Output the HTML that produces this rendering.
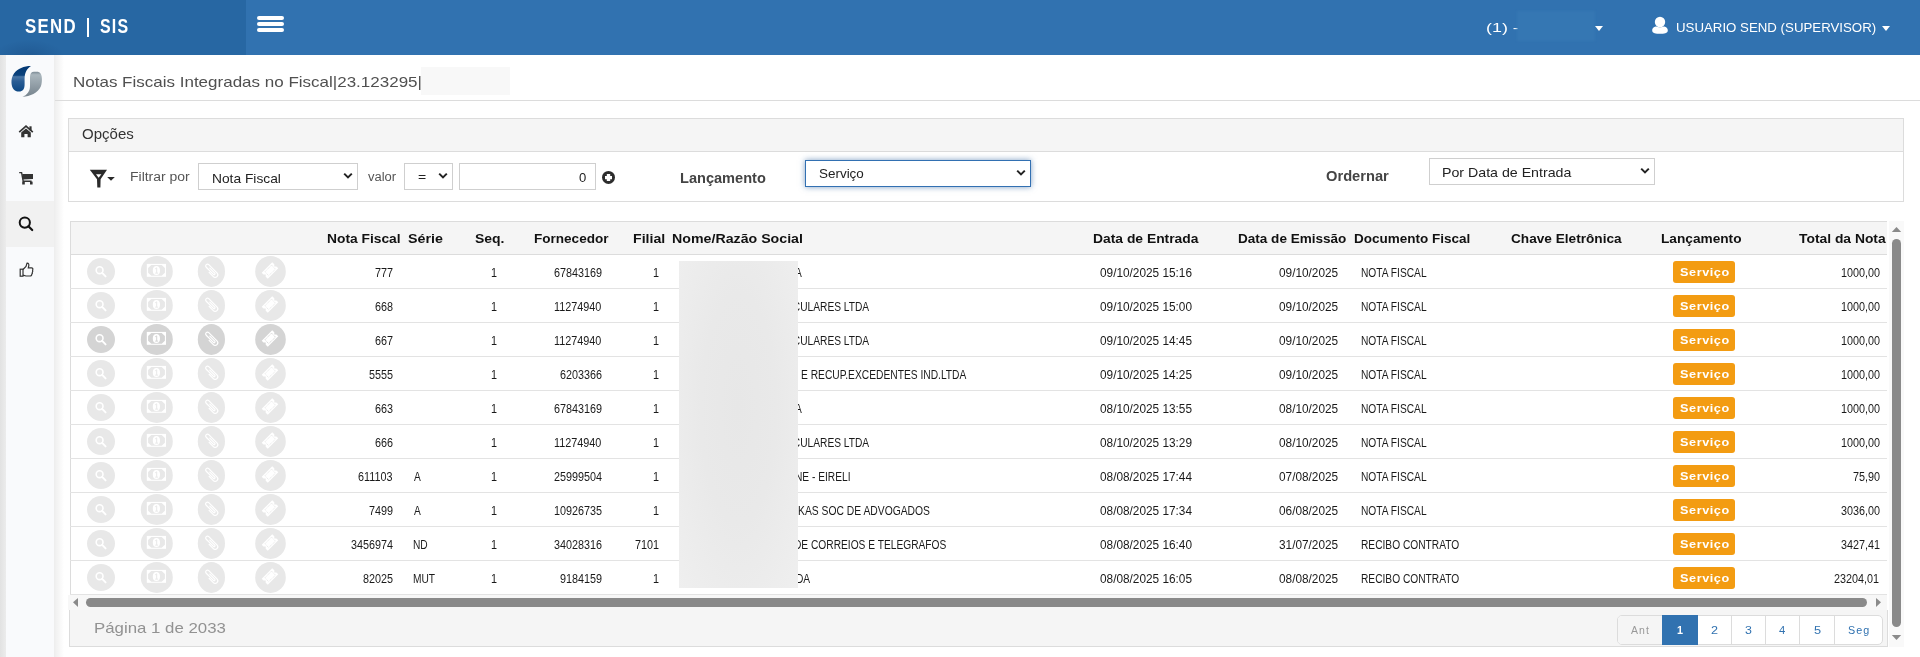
<!DOCTYPE html>
<html><head><meta charset="utf-8"><title>Notas Fiscais Integradas no Fiscal</title>
<style>
html,body{margin:0;padding:0;width:1920px;height:657px;overflow:hidden;background:#fff;font-family:"Liberation Sans",sans-serif}
body{position:relative}
.t{position:absolute;white-space:pre}
</style></head><body>
<div style="position:absolute;left:0px;top:0px;width:1920px;height:55px;background:#3172b0"></div>
<div style="position:absolute;left:0px;top:0px;width:246px;height:55px;background:#2767a3"></div>
<div style="position:absolute;left:0px;top:40px;width:64px;height:15px;background:radial-gradient(ellipse 55% 100% at 45% 100%,rgba(0,25,70,0.16),rgba(0,25,70,0))"></div>
<div class="t" style="left:24.78px;top:26px;font:bold 20px 'Liberation Sans';line-height:0;color:#fff;transform:scaleX(0.8414);transform-origin:0 0;letter-spacing:1.5px">SEND</div>
<div style="position:absolute;left:86.5px;top:18px;width:2.2px;height:19px;background:#fff"></div>
<div class="t" style="left:99.61px;top:26px;font:bold 20px 'Liberation Sans';line-height:0;color:#fff;transform:scaleX(0.7964);transform-origin:0 0;letter-spacing:1.5px">SIS</div>
<div style="position:absolute;left:257px;top:16px;width:27px;height:4px;background:#fff;border-radius:2px"></div>
<div style="position:absolute;left:257px;top:22px;width:27px;height:4px;background:#fff;border-radius:2px"></div>
<div style="position:absolute;left:257px;top:28px;width:27px;height:4px;background:#fff;border-radius:2px"></div>
<div class="t" style="left:1485.89px;top:28px;font:13px 'Liberation Sans';line-height:0;color:#fff;transform:scaleX(1.3769);transform-origin:0 0;">(1) -</div>
<div style="position:absolute;left:1517px;top:11px;width:78px;height:30px;background:#3577b3;filter:blur(1px)"></div>
<svg style="position:absolute;left:1594px;top:25px" width="10" height="7"><path d="M1 1 L9 1 L5 6 Z" fill="#fff"/></svg>
<svg style="position:absolute;left:1651px;top:16px" width="18" height="19" viewBox="0 0 18 19"><circle cx="9" cy="6" r="5.2" fill="#fff"/><path d="M1.2 14.5 C1.2 11.8 3.5 10.8 5.5 10.6 C7 11.6 11 11.6 12.5 10.6 C14.5 10.8 16.8 11.8 16.8 14.5 C16.8 17.2 13 17.8 9 17.8 C5 17.8 1.2 17.2 1.2 14.5 Z" fill="#fff"/></svg>
<div class="t" style="left:1676.08px;top:28px;font:13px 'Liberation Sans';line-height:0;color:#fff;transform:scaleX(1.0200);transform-origin:0 0;">USUARIO SEND (SUPERVISOR)</div>
<svg style="position:absolute;left:1881px;top:25px" width="10" height="7"><path d="M1 1 L9 1 L5 6 Z" fill="#fff"/></svg>
<div style="position:absolute;left:0px;top:55px;width:6px;height:602px;background:linear-gradient(to right,#e2e2e2,#ececec)"></div>
<div style="position:absolute;left:6px;top:55px;width:48px;height:602px;background:#f9fafc"></div>
<div style="position:absolute;left:54px;top:55px;width:10px;height:602px;background:linear-gradient(to right,rgba(0,0,0,0.07),rgba(0,0,0,0))"></div>
<div style="position:absolute;left:6px;top:201px;width:48px;height:46px;background:#f1f1f1"></div>
<svg style="position:absolute;left:8px;top:62px" width="38" height="38" viewBox="8 62 38 38">
<defs><linearGradient id="lb" x1="0" y1="0" x2="0" y2="1"><stop offset="0" stop-color="#023873"/><stop offset="0.36" stop-color="#0a417c"/><stop offset="0.42" stop-color="#4a76a6"/><stop offset="0.6" stop-color="#2a5d95"/><stop offset="1" stop-color="#0c4784"/></linearGradient>
<linearGradient id="lg" x1="0" y1="0" x2="0" y2="1"><stop offset="0" stop-color="#7c8b95"/><stop offset="0.12" stop-color="#aab6bd"/><stop offset="1" stop-color="#76838d"/></linearGradient></defs>
<path d="M31 66 C24 66 17.5 68.6 14 73.6 C12 76.6 11.3 79.6 11.5 83 C11.8 88.2 14.3 91.6 19 91.6 C22.8 91.6 24.6 89 24.6 84.5 L24.6 79 C24.6 72.5 27 68.6 31 66 Z" fill="url(#lb)"/>
<path d="M22.5 96.8 C30 96.5 38 93 40.8 86.5 C41.7 84 41.9 81.5 41.9 79 C41.9 74.5 40.5 71.8 36.5 71.8 L34 71.8 C31.5 71.8 30 73.5 30 77 L30 86 C30 91.5 27 95 22.5 96.8 Z" fill="url(#lg)"/>
</svg>
<svg style="position:absolute;left:18px;top:125px" width="16" height="13" viewBox="0 0 16 13">
<path d="M1.2 7.2 L8 1.2 L14.8 7.2" fill="none" stroke="#333" stroke-width="1.7"/>
<rect x="11.4" y="1.3" width="2.2" height="4" fill="#333"/>
<path d="M3.2 7.6 L8 3.6 L12.8 7.6 L12.8 12.3 L9.6 12.3 L9.6 9 L6.4 9 L6.4 12.3 L3.2 12.3 Z" fill="#333"/></svg>
<svg style="position:absolute;left:18px;top:171px" width="16" height="15" viewBox="0 0 16 15">
<path d="M1.2 1.6 L3.6 1.6 L5.2 10.3 L13.6 10.3" fill="none" stroke="#333" stroke-width="1.4"/>
<path d="M4.2 3 L15 3 L15 8 L5 8.6 Z" fill="#333"/>
<rect x="4.2" y="10.6" width="2.6" height="2.9" fill="#333"/><rect x="12" y="10.6" width="2.6" height="2.9" fill="#333"/></svg>
<svg style="position:absolute;left:17px;top:215px" width="18" height="18" viewBox="0 0 18 18">
<circle cx="7.8" cy="7.6" r="5.1" fill="none" stroke="#111" stroke-width="2"/>
<path d="M11.4 11.3 L15.2 15" stroke="#111" stroke-width="2.2" stroke-linecap="round"/></svg>
<svg style="position:absolute;left:18px;top:261px" width="17" height="17" viewBox="0 0 17 17">
<rect x="2.2" y="8.2" width="2.8" height="7" fill="none" stroke="#333" stroke-width="1.2"/>
<path d="M5 8.5 L8 5.5 L9 2.2 C10.5 2 11 3.2 10.8 4.6 L10.3 6.8 L13.6 6.8 C14.6 6.8 15 7.6 14.8 8.5 L14.6 9.6 C14.9 10.3 14.6 11 14.3 11.3 C14.5 12 14.2 12.8 13.8 13 C13.9 14 13.2 15 12.2 15 L8 15 L5 14.2" fill="none" stroke="#333" stroke-width="1.2"/></svg>
<div class="t" style="left:72.91px;top:82px;font:15px 'Liberation Sans';line-height:0;color:#505050;transform:scaleX(1.1331);transform-origin:0 0;">Notas Fiscais Integradas no Fiscal|23.123295|</div>
<div style="position:absolute;left:421px;top:67px;width:89px;height:28px;background:#f8f8f8"></div>
<div style="position:absolute;left:55px;top:100px;width:1865px;height:1px;background:#dcdcdc"></div>
<div style="position:absolute;left:68px;top:118px;width:1836px;height:84px;box-sizing:border-box;border:1px solid #dcdcdc;background:#fff"></div>
<div style="position:absolute;left:69px;top:119px;width:1834px;height:32px;background:#f5f5f5"></div>
<div style="position:absolute;left:69px;top:151px;width:1834px;height:1px;background:#dcdcdc"></div>
<div class="t" style="left:81.76px;top:134px;font:14px 'Liberation Sans';line-height:0;color:#333;transform:scaleX(1.0726);transform-origin:0 0;">Opções</div>
<svg style="position:absolute;left:86px;top:166px" width="32" height="26" viewBox="86 166 32 26">
<path d="M89.8 169.8 L107 169.8 L100.6 179.2 L100.4 187.6 L97.3 187.6 L97 179.2 Z M96 174.2 L98.6 177.8 L101.4 174.2 Z" fill="#2a2a2a" fill-rule="evenodd"/>
<path d="M107.2 177 L114.8 177 L111 180.8 Z" fill="#2a2a2a"/></svg>
<div class="t" style="left:130.47px;top:177px;font:12px 'Liberation Sans';line-height:0;color:#555;transform:scaleX(1.1630);transform-origin:0 0;">Filtrar por</div>
<div style="position:absolute;left:198px;top:163px;width:160px;height:27px;box-sizing:border-box;border:1px solid #cfcfcf;background:#fff;"></div>
<div class="t" style="left:211.53px;top:179px;font:13px 'Liberation Sans';line-height:0;color:#222;transform:scaleX(1.0591);transform-origin:0 0;">Nota Fiscal</div>
<svg style="position:absolute;left:342.3px;top:171.4px" width="12" height="10" viewBox="0 0 12 10"><path d="M2.2 2.6 L6 6.4 L9.8 2.6" fill="none" stroke="#222" stroke-width="2"/></svg>
<div class="t" style="left:367.84px;top:177px;font:12px 'Liberation Sans';line-height:0;color:#555;transform:scaleX(1.0799);transform-origin:0 0;">valor</div>
<div style="position:absolute;left:404px;top:163px;width:49px;height:27px;box-sizing:border-box;border:1px solid #cfcfcf;background:#fff;"></div>
<div class="t" style="left:418.29px;top:177px;font:13px 'Liberation Sans';line-height:0;color:#222;transform:scaleX(1.0785);transform-origin:0 0;">=</div>
<svg style="position:absolute;left:437px;top:171.4px" width="12" height="10" viewBox="0 0 12 10"><path d="M2.2 2.6 L6 6.4 L9.8 2.6" fill="none" stroke="#222" stroke-width="2"/></svg>
<div style="position:absolute;left:459px;top:163px;width:137px;height:27px;box-sizing:border-box;border:1px solid #cfcfcf;background:#fff;"></div>
<div class="t" style="left:578.92px;top:178px;font:13px 'Liberation Sans';line-height:0;color:#222;transform:scaleX(1.0039);transform-origin:0 0;">0</div>
<svg style="position:absolute;left:600px;top:169px" width="17" height="17" viewBox="600 169 17 17">
<circle cx="608.5" cy="177.4" r="6.5" fill="#2d2d2d"/><path d="M605 176 H612 V179.2 H605 Z M606.8 174.1 H610.2 V181.1 H606.8 Z" fill="#fff"/></svg>
<div class="t" style="left:679.51px;top:178px;font:bold 14px 'Liberation Sans';line-height:0;color:#444;transform:scaleX(1.0406);transform-origin:0 0;">Lançamento</div>
<div style="position:absolute;left:805px;top:160px;width:226px;height:27px;box-sizing:border-box;border:1px solid #3270b2;background:#fff;box-shadow:0 0 6px rgba(45,95,155,0.6)"></div>
<div class="t" style="left:818.52px;top:174px;font:13px 'Liberation Sans';line-height:0;color:#222;transform:scaleX(1.0338);transform-origin:0 0;">Serviço</div>
<svg style="position:absolute;left:1015px;top:168.2px" width="12" height="10" viewBox="0 0 12 10"><path d="M2.2 2.6 L6 6.4 L9.8 2.6" fill="none" stroke="#222" stroke-width="2"/></svg>
<div class="t" style="left:1326.04px;top:176px;font:bold 14px 'Liberation Sans';line-height:0;color:#444;transform:scaleX(1.0482);transform-origin:0 0;">Ordernar</div>
<div style="position:absolute;left:1429px;top:158px;width:226px;height:27px;box-sizing:border-box;border:1px solid #cfcfcf;background:#fff;"></div>
<div class="t" style="left:1442.30px;top:173px;font:13px 'Liberation Sans';line-height:0;color:#222;transform:scaleX(1.0914);transform-origin:0 0;">Por Data de Entrada</div>
<svg style="position:absolute;left:1639px;top:166.4px" width="12" height="10" viewBox="0 0 12 10"><path d="M2.2 2.6 L6 6.4 L9.8 2.6" fill="none" stroke="#222" stroke-width="2"/></svg>
<div style="position:absolute;left:70px;top:221px;width:1817px;height:1px;background:#dcdcdc"></div>
<div style="position:absolute;left:70px;top:221px;width:1px;height:374px;background:#dcdcdc"></div>
<div style="position:absolute;left:71px;top:222px;width:1816px;height:32px;background:#f5f5f5"></div>
<div style="position:absolute;left:70px;top:254px;width:1817px;height:1px;background:#dcdcdc"></div>
<div class="t" style="left:326.62px;top:239px;font:bold 12px 'Liberation Sans';line-height:0;color:#111;transform:scaleX(1.1492);transform-origin:0 0;">Nota Fiscal</div>
<div class="t" style="left:407.90px;top:239px;font:bold 12px 'Liberation Sans';line-height:0;color:#111;transform:scaleX(1.1871);transform-origin:0 0;">Série</div>
<div class="t" style="left:474.76px;top:239px;font:bold 12px 'Liberation Sans';line-height:0;color:#111;transform:scaleX(1.1637);transform-origin:0 0;">Seq.</div>
<div class="t" style="left:533.83px;top:239px;font:bold 12px 'Liberation Sans';line-height:0;color:#111;transform:scaleX(1.1287);transform-origin:0 0;">Fornecedor</div>
<div class="t" style="left:633.49px;top:239px;font:bold 12px 'Liberation Sans';line-height:0;color:#111;transform:scaleX(1.1776);transform-origin:0 0;">Filial</div>
<div class="t" style="left:672.49px;top:239px;font:bold 12px 'Liberation Sans';line-height:0;color:#111;transform:scaleX(1.1830);transform-origin:0 0;">Nome/Razão Social</div>
<div class="t" style="left:1092.61px;top:239px;font:bold 12px 'Liberation Sans';line-height:0;color:#111;transform:scaleX(1.1546);transform-origin:0 0;">Data de Entrada</div>
<div class="t" style="left:1237.88px;top:239px;font:bold 12px 'Liberation Sans';line-height:0;color:#111;transform:scaleX(1.1286);transform-origin:0 0;">Data de Emissão</div>
<div class="t" style="left:1353.74px;top:239px;font:bold 12px 'Liberation Sans';line-height:0;color:#111;transform:scaleX(1.1248);transform-origin:0 0;">Documento Fiscal</div>
<div class="t" style="left:1510.79px;top:239px;font:bold 12px 'Liberation Sans';line-height:0;color:#111;transform:scaleX(1.1361);transform-origin:0 0;">Chave Eletrônica</div>
<div class="t" style="left:1660.62px;top:239px;font:bold 12px 'Liberation Sans';line-height:0;color:#111;transform:scaleX(1.1390);transform-origin:0 0;">Lançamento</div>
<div class="t" style="left:1799.08px;top:239px;font:bold 12px 'Liberation Sans';line-height:0;color:#111;transform:scaleX(1.1540);transform-origin:0 0;">Total da Nota</div>
<div style="position:absolute;left:70px;top:288px;width:1817px;height:1px;background:#e3e3e3"></div>
<svg style="position:absolute;left:84px;top:255px" width="206" height="33" viewBox="84 255 206 33">
<ellipse cx="101" cy="271.5" rx="14" ry="13.6" fill="#e8e8e8"/>
<circle cx="99.6" cy="270.2" r="3.4" fill="none" stroke="#fff" stroke-width="1.6"/><path d="M102.2 272.8 L105.6 276.4" stroke="#fff" stroke-width="1.9" stroke-linecap="round"/>
<ellipse cx="156.8" cy="271.4" rx="16" ry="15.5" fill="#e8e8e8"/>
<rect x="146.8" y="263.9" width="19.2" height="12.9" fill="#fff"/>
<path d="M151.3 265.1 L161.7 265.1 L164.9 268 L164.9 272.7 L161.7 275.7 L151.3 275.7 L148.1 272.7 L148.1 268 Z" fill="#e8e8e8"/>
<ellipse cx="156.4" cy="270.6" rx="3.6" ry="4.5" fill="#fff"/><path d="M155.3 268.7 L156.7 267.9 L156.7 273.1 M155.2 273.1 H158.1" stroke="#e8e8e8" stroke-width="1" fill="none"/>
<ellipse cx="211.4" cy="271.4" rx="13.6" ry="15.5" fill="#e8e8e8"/>
<g transform="translate(210.6 270.2) rotate(45)" fill="none" stroke="#fff" stroke-width="1.2" stroke-linecap="round">
<path d="M -2 -0.9 L 5 -0.9 A 0.95 0.95 0 0 1 5 1 L -5.2 1 A 1.8 1.8 0 0 1 -5.2 -2.6 L 6.4 -2.6 A 2.6 2.6 0 0 1 6.4 2.6 L 0.5 2.6"/>
</g>
<ellipse cx="270.5" cy="271.4" rx="15.3" ry="15.5" fill="#e8e8e8"/>
<path d="M272.2 262.2 L274.3 264.3 L274.3 266.4 L276.4 266.4 L278.3 268.3 L267.8 278.8 L265.7 276.7 L265.7 274.5 L263.5 274.5 L261.7 272.7 Z" fill="#fff"/>
<path d="M271.5 265.1 L275.5 269.2 L268.6 275.6 L265.0 271.8 Z" fill="none" stroke="#e8e8e8" stroke-width="0.9" stroke-dasharray="1.3 0.7"/>
</svg>
<div class="t" style="left:375.12px;top:273px;font:12px 'Liberation Sans';line-height:0;color:#1a1a1a;transform:scaleX(0.9000);transform-origin:0 0;">777</div>
<div class="t" style="left:491.38px;top:273px;font:12px 'Liberation Sans';line-height:0;color:#1a1a1a;transform:scaleX(0.9000);transform-origin:0 0;">1</div>
<div class="t" style="left:553.61px;top:273px;font:12px 'Liberation Sans';line-height:0;color:#1a1a1a;transform:scaleX(0.9000);transform-origin:0 0;">67843169</div>
<div class="t" style="left:653.38px;top:273px;font:12px 'Liberation Sans';line-height:0;color:#1a1a1a;transform:scaleX(0.9000);transform-origin:0 0;">1</div>
<div class="t" style="left:795.34px;top:273px;font:12px 'Liberation Sans';line-height:0;color:#1a1a1a;transform:scaleX(0.8500);transform-origin:0 0;">A</div>
<div class="t" style="left:1099.87px;top:273px;font:12px 'Liberation Sans';line-height:0;color:#1a1a1a;transform:scaleX(0.9850);transform-origin:0 0;">09/10/2025 15:16</div>
<div class="t" style="left:1279.07px;top:273px;font:12px 'Liberation Sans';line-height:0;color:#1a1a1a;transform:scaleX(0.9850);transform-origin:0 0;">09/10/2025</div>
<div class="t" style="left:1360.95px;top:273px;font:12px 'Liberation Sans';line-height:0;color:#1a1a1a;transform:scaleX(0.8500);transform-origin:0 0;">NOTA FISCAL</div>
<div style="position:absolute;left:1673px;top:261px;width:62px;height:22px;background:#f39c12;border-radius:3px"></div>
<div class="t" style="left:1679.89px;top:272px;font:bold 11px 'Liberation Sans';line-height:0;color:#fff;transform:scaleX(1.1506);transform-origin:0 0;letter-spacing:0.5px">Serviço</div>
<div class="t" style="left:1840.67px;top:273px;font:12px 'Liberation Sans';line-height:0;color:#1a1a1a;transform:scaleX(0.9000);transform-origin:0 0;">1000,00</div>
<div style="position:absolute;left:70px;top:322px;width:1817px;height:1px;background:#e3e3e3"></div>
<svg style="position:absolute;left:84px;top:289px" width="206" height="33" viewBox="84 255 206 33">
<ellipse cx="101" cy="271.5" rx="14" ry="13.6" fill="#e8e8e8"/>
<circle cx="99.6" cy="270.2" r="3.4" fill="none" stroke="#fff" stroke-width="1.6"/><path d="M102.2 272.8 L105.6 276.4" stroke="#fff" stroke-width="1.9" stroke-linecap="round"/>
<ellipse cx="156.8" cy="271.4" rx="16" ry="15.5" fill="#e8e8e8"/>
<rect x="146.8" y="263.9" width="19.2" height="12.9" fill="#fff"/>
<path d="M151.3 265.1 L161.7 265.1 L164.9 268 L164.9 272.7 L161.7 275.7 L151.3 275.7 L148.1 272.7 L148.1 268 Z" fill="#e8e8e8"/>
<ellipse cx="156.4" cy="270.6" rx="3.6" ry="4.5" fill="#fff"/><path d="M155.3 268.7 L156.7 267.9 L156.7 273.1 M155.2 273.1 H158.1" stroke="#e8e8e8" stroke-width="1" fill="none"/>
<ellipse cx="211.4" cy="271.4" rx="13.6" ry="15.5" fill="#e8e8e8"/>
<g transform="translate(210.6 270.2) rotate(45)" fill="none" stroke="#fff" stroke-width="1.2" stroke-linecap="round">
<path d="M -2 -0.9 L 5 -0.9 A 0.95 0.95 0 0 1 5 1 L -5.2 1 A 1.8 1.8 0 0 1 -5.2 -2.6 L 6.4 -2.6 A 2.6 2.6 0 0 1 6.4 2.6 L 0.5 2.6"/>
</g>
<ellipse cx="270.5" cy="271.4" rx="15.3" ry="15.5" fill="#e8e8e8"/>
<path d="M272.2 262.2 L274.3 264.3 L274.3 266.4 L276.4 266.4 L278.3 268.3 L267.8 278.8 L265.7 276.7 L265.7 274.5 L263.5 274.5 L261.7 272.7 Z" fill="#fff"/>
<path d="M271.5 265.1 L275.5 269.2 L268.6 275.6 L265.0 271.8 Z" fill="none" stroke="#e8e8e8" stroke-width="0.9" stroke-dasharray="1.3 0.7"/>
</svg>
<div class="t" style="left:375.10px;top:307px;font:12px 'Liberation Sans';line-height:0;color:#1a1a1a;transform:scaleX(0.9000);transform-origin:0 0;">668</div>
<div class="t" style="left:491.38px;top:307px;font:12px 'Liberation Sans';line-height:0;color:#1a1a1a;transform:scaleX(0.9000);transform-origin:0 0;">1</div>
<div class="t" style="left:554.47px;top:307px;font:12px 'Liberation Sans';line-height:0;color:#1a1a1a;transform:scaleX(0.9000);transform-origin:0 0;">11274940</div>
<div class="t" style="left:653.38px;top:307px;font:12px 'Liberation Sans';line-height:0;color:#1a1a1a;transform:scaleX(0.9000);transform-origin:0 0;">1</div>
<div class="t" style="left:789.57px;top:307px;font:12px 'Liberation Sans';line-height:0;color:#1a1a1a;transform:scaleX(0.8500);transform-origin:0 0;">ICULARES LTDA</div>
<div class="t" style="left:1099.87px;top:307px;font:12px 'Liberation Sans';line-height:0;color:#1a1a1a;transform:scaleX(0.9850);transform-origin:0 0;">09/10/2025 15:00</div>
<div class="t" style="left:1279.07px;top:307px;font:12px 'Liberation Sans';line-height:0;color:#1a1a1a;transform:scaleX(0.9850);transform-origin:0 0;">09/10/2025</div>
<div class="t" style="left:1360.95px;top:307px;font:12px 'Liberation Sans';line-height:0;color:#1a1a1a;transform:scaleX(0.8500);transform-origin:0 0;">NOTA FISCAL</div>
<div style="position:absolute;left:1673px;top:295px;width:62px;height:22px;background:#f39c12;border-radius:3px"></div>
<div class="t" style="left:1679.89px;top:306px;font:bold 11px 'Liberation Sans';line-height:0;color:#fff;transform:scaleX(1.1506);transform-origin:0 0;letter-spacing:0.5px">Serviço</div>
<div class="t" style="left:1840.67px;top:307px;font:12px 'Liberation Sans';line-height:0;color:#1a1a1a;transform:scaleX(0.9000);transform-origin:0 0;">1000,00</div>
<div style="position:absolute;left:70px;top:356px;width:1817px;height:1px;background:#e3e3e3"></div>
<svg style="position:absolute;left:84px;top:323px" width="206" height="33" viewBox="84 255 206 33">
<ellipse cx="101" cy="271.5" rx="14" ry="13.6" fill="#d4d4d4"/>
<circle cx="99.6" cy="270.2" r="3.4" fill="none" stroke="#fff" stroke-width="1.6"/><path d="M102.2 272.8 L105.6 276.4" stroke="#fff" stroke-width="1.9" stroke-linecap="round"/>
<ellipse cx="156.8" cy="271.4" rx="16" ry="15.5" fill="#d4d4d4"/>
<rect x="146.8" y="263.9" width="19.2" height="12.9" fill="#fff"/>
<path d="M151.3 265.1 L161.7 265.1 L164.9 268 L164.9 272.7 L161.7 275.7 L151.3 275.7 L148.1 272.7 L148.1 268 Z" fill="#d4d4d4"/>
<ellipse cx="156.4" cy="270.6" rx="3.6" ry="4.5" fill="#fff"/><path d="M155.3 268.7 L156.7 267.9 L156.7 273.1 M155.2 273.1 H158.1" stroke="#d4d4d4" stroke-width="1" fill="none"/>
<ellipse cx="211.4" cy="271.4" rx="13.6" ry="15.5" fill="#d4d4d4"/>
<g transform="translate(210.6 270.2) rotate(45)" fill="none" stroke="#fff" stroke-width="1.2" stroke-linecap="round">
<path d="M -2 -0.9 L 5 -0.9 A 0.95 0.95 0 0 1 5 1 L -5.2 1 A 1.8 1.8 0 0 1 -5.2 -2.6 L 6.4 -2.6 A 2.6 2.6 0 0 1 6.4 2.6 L 0.5 2.6"/>
</g>
<ellipse cx="270.5" cy="271.4" rx="15.3" ry="15.5" fill="#d4d4d4"/>
<path d="M272.2 262.2 L274.3 264.3 L274.3 266.4 L276.4 266.4 L278.3 268.3 L267.8 278.8 L265.7 276.7 L265.7 274.5 L263.5 274.5 L261.7 272.7 Z" fill="#fff"/>
<path d="M271.5 265.1 L275.5 269.2 L268.6 275.6 L265.0 271.8 Z" fill="none" stroke="#d4d4d4" stroke-width="0.9" stroke-dasharray="1.3 0.7"/>
</svg>
<div class="t" style="left:375.12px;top:341px;font:12px 'Liberation Sans';line-height:0;color:#1a1a1a;transform:scaleX(0.9000);transform-origin:0 0;">667</div>
<div class="t" style="left:491.38px;top:341px;font:12px 'Liberation Sans';line-height:0;color:#1a1a1a;transform:scaleX(0.9000);transform-origin:0 0;">1</div>
<div class="t" style="left:554.47px;top:341px;font:12px 'Liberation Sans';line-height:0;color:#1a1a1a;transform:scaleX(0.9000);transform-origin:0 0;">11274940</div>
<div class="t" style="left:653.38px;top:341px;font:12px 'Liberation Sans';line-height:0;color:#1a1a1a;transform:scaleX(0.9000);transform-origin:0 0;">1</div>
<div class="t" style="left:789.57px;top:341px;font:12px 'Liberation Sans';line-height:0;color:#1a1a1a;transform:scaleX(0.8500);transform-origin:0 0;">ICULARES LTDA</div>
<div class="t" style="left:1099.87px;top:341px;font:12px 'Liberation Sans';line-height:0;color:#1a1a1a;transform:scaleX(0.9850);transform-origin:0 0;">09/10/2025 14:45</div>
<div class="t" style="left:1279.07px;top:341px;font:12px 'Liberation Sans';line-height:0;color:#1a1a1a;transform:scaleX(0.9850);transform-origin:0 0;">09/10/2025</div>
<div class="t" style="left:1360.95px;top:341px;font:12px 'Liberation Sans';line-height:0;color:#1a1a1a;transform:scaleX(0.8500);transform-origin:0 0;">NOTA FISCAL</div>
<div style="position:absolute;left:1673px;top:329px;width:62px;height:22px;background:#f39c12;border-radius:3px"></div>
<div class="t" style="left:1679.89px;top:340px;font:bold 11px 'Liberation Sans';line-height:0;color:#fff;transform:scaleX(1.1506);transform-origin:0 0;letter-spacing:0.5px">Serviço</div>
<div class="t" style="left:1840.67px;top:341px;font:12px 'Liberation Sans';line-height:0;color:#1a1a1a;transform:scaleX(0.9000);transform-origin:0 0;">1000,00</div>
<div style="position:absolute;left:70px;top:390px;width:1817px;height:1px;background:#e3e3e3"></div>
<svg style="position:absolute;left:84px;top:357px" width="206" height="33" viewBox="84 255 206 33">
<ellipse cx="101" cy="271.5" rx="14" ry="13.6" fill="#e8e8e8"/>
<circle cx="99.6" cy="270.2" r="3.4" fill="none" stroke="#fff" stroke-width="1.6"/><path d="M102.2 272.8 L105.6 276.4" stroke="#fff" stroke-width="1.9" stroke-linecap="round"/>
<ellipse cx="156.8" cy="271.4" rx="16" ry="15.5" fill="#e8e8e8"/>
<rect x="146.8" y="263.9" width="19.2" height="12.9" fill="#fff"/>
<path d="M151.3 265.1 L161.7 265.1 L164.9 268 L164.9 272.7 L161.7 275.7 L151.3 275.7 L148.1 272.7 L148.1 268 Z" fill="#e8e8e8"/>
<ellipse cx="156.4" cy="270.6" rx="3.6" ry="4.5" fill="#fff"/><path d="M155.3 268.7 L156.7 267.9 L156.7 273.1 M155.2 273.1 H158.1" stroke="#e8e8e8" stroke-width="1" fill="none"/>
<ellipse cx="211.4" cy="271.4" rx="13.6" ry="15.5" fill="#e8e8e8"/>
<g transform="translate(210.6 270.2) rotate(45)" fill="none" stroke="#fff" stroke-width="1.2" stroke-linecap="round">
<path d="M -2 -0.9 L 5 -0.9 A 0.95 0.95 0 0 1 5 1 L -5.2 1 A 1.8 1.8 0 0 1 -5.2 -2.6 L 6.4 -2.6 A 2.6 2.6 0 0 1 6.4 2.6 L 0.5 2.6"/>
</g>
<ellipse cx="270.5" cy="271.4" rx="15.3" ry="15.5" fill="#e8e8e8"/>
<path d="M272.2 262.2 L274.3 264.3 L274.3 266.4 L276.4 266.4 L278.3 268.3 L267.8 278.8 L265.7 276.7 L265.7 274.5 L263.5 274.5 L261.7 272.7 Z" fill="#fff"/>
<path d="M271.5 265.1 L275.5 269.2 L268.6 275.6 L265.0 271.8 Z" fill="none" stroke="#e8e8e8" stroke-width="0.9" stroke-dasharray="1.3 0.7"/>
</svg>
<div class="t" style="left:368.98px;top:375px;font:12px 'Liberation Sans';line-height:0;color:#1a1a1a;transform:scaleX(0.9000);transform-origin:0 0;">5555</div>
<div class="t" style="left:491.38px;top:375px;font:12px 'Liberation Sans';line-height:0;color:#1a1a1a;transform:scaleX(0.9000);transform-origin:0 0;">1</div>
<div class="t" style="left:559.81px;top:375px;font:12px 'Liberation Sans';line-height:0;color:#1a1a1a;transform:scaleX(0.9000);transform-origin:0 0;">6203366</div>
<div class="t" style="left:653.38px;top:375px;font:12px 'Liberation Sans';line-height:0;color:#1a1a1a;transform:scaleX(0.9000);transform-origin:0 0;">1</div>
<div class="t" style="left:800.84px;top:375px;font:12px 'Liberation Sans';line-height:0;color:#1a1a1a;transform:scaleX(0.8540);transform-origin:0 0;">E RECUP.EXCEDENTES IND.LTDA</div>
<div class="t" style="left:1099.87px;top:375px;font:12px 'Liberation Sans';line-height:0;color:#1a1a1a;transform:scaleX(0.9850);transform-origin:0 0;">09/10/2025 14:25</div>
<div class="t" style="left:1279.07px;top:375px;font:12px 'Liberation Sans';line-height:0;color:#1a1a1a;transform:scaleX(0.9850);transform-origin:0 0;">09/10/2025</div>
<div class="t" style="left:1360.95px;top:375px;font:12px 'Liberation Sans';line-height:0;color:#1a1a1a;transform:scaleX(0.8500);transform-origin:0 0;">NOTA FISCAL</div>
<div style="position:absolute;left:1673px;top:363px;width:62px;height:22px;background:#f39c12;border-radius:3px"></div>
<div class="t" style="left:1679.89px;top:374px;font:bold 11px 'Liberation Sans';line-height:0;color:#fff;transform:scaleX(1.1506);transform-origin:0 0;letter-spacing:0.5px">Serviço</div>
<div class="t" style="left:1840.67px;top:375px;font:12px 'Liberation Sans';line-height:0;color:#1a1a1a;transform:scaleX(0.9000);transform-origin:0 0;">1000,00</div>
<div style="position:absolute;left:70px;top:424px;width:1817px;height:1px;background:#e3e3e3"></div>
<svg style="position:absolute;left:84px;top:391px" width="206" height="33" viewBox="84 255 206 33">
<ellipse cx="101" cy="271.5" rx="14" ry="13.6" fill="#e8e8e8"/>
<circle cx="99.6" cy="270.2" r="3.4" fill="none" stroke="#fff" stroke-width="1.6"/><path d="M102.2 272.8 L105.6 276.4" stroke="#fff" stroke-width="1.9" stroke-linecap="round"/>
<ellipse cx="156.8" cy="271.4" rx="16" ry="15.5" fill="#e8e8e8"/>
<rect x="146.8" y="263.9" width="19.2" height="12.9" fill="#fff"/>
<path d="M151.3 265.1 L161.7 265.1 L164.9 268 L164.9 272.7 L161.7 275.7 L151.3 275.7 L148.1 272.7 L148.1 268 Z" fill="#e8e8e8"/>
<ellipse cx="156.4" cy="270.6" rx="3.6" ry="4.5" fill="#fff"/><path d="M155.3 268.7 L156.7 267.9 L156.7 273.1 M155.2 273.1 H158.1" stroke="#e8e8e8" stroke-width="1" fill="none"/>
<ellipse cx="211.4" cy="271.4" rx="13.6" ry="15.5" fill="#e8e8e8"/>
<g transform="translate(210.6 270.2) rotate(45)" fill="none" stroke="#fff" stroke-width="1.2" stroke-linecap="round">
<path d="M -2 -0.9 L 5 -0.9 A 0.95 0.95 0 0 1 5 1 L -5.2 1 A 1.8 1.8 0 0 1 -5.2 -2.6 L 6.4 -2.6 A 2.6 2.6 0 0 1 6.4 2.6 L 0.5 2.6"/>
</g>
<ellipse cx="270.5" cy="271.4" rx="15.3" ry="15.5" fill="#e8e8e8"/>
<path d="M272.2 262.2 L274.3 264.3 L274.3 266.4 L276.4 266.4 L278.3 268.3 L267.8 278.8 L265.7 276.7 L265.7 274.5 L263.5 274.5 L261.7 272.7 Z" fill="#fff"/>
<path d="M271.5 265.1 L275.5 269.2 L268.6 275.6 L265.0 271.8 Z" fill="none" stroke="#e8e8e8" stroke-width="0.9" stroke-dasharray="1.3 0.7"/>
</svg>
<div class="t" style="left:375.10px;top:409px;font:12px 'Liberation Sans';line-height:0;color:#1a1a1a;transform:scaleX(0.9000);transform-origin:0 0;">663</div>
<div class="t" style="left:491.38px;top:409px;font:12px 'Liberation Sans';line-height:0;color:#1a1a1a;transform:scaleX(0.9000);transform-origin:0 0;">1</div>
<div class="t" style="left:553.61px;top:409px;font:12px 'Liberation Sans';line-height:0;color:#1a1a1a;transform:scaleX(0.9000);transform-origin:0 0;">67843169</div>
<div class="t" style="left:653.38px;top:409px;font:12px 'Liberation Sans';line-height:0;color:#1a1a1a;transform:scaleX(0.9000);transform-origin:0 0;">1</div>
<div class="t" style="left:795.34px;top:409px;font:12px 'Liberation Sans';line-height:0;color:#1a1a1a;transform:scaleX(0.8500);transform-origin:0 0;">A</div>
<div class="t" style="left:1099.87px;top:409px;font:12px 'Liberation Sans';line-height:0;color:#1a1a1a;transform:scaleX(0.9850);transform-origin:0 0;">08/10/2025 13:55</div>
<div class="t" style="left:1279.07px;top:409px;font:12px 'Liberation Sans';line-height:0;color:#1a1a1a;transform:scaleX(0.9850);transform-origin:0 0;">08/10/2025</div>
<div class="t" style="left:1360.95px;top:409px;font:12px 'Liberation Sans';line-height:0;color:#1a1a1a;transform:scaleX(0.8500);transform-origin:0 0;">NOTA FISCAL</div>
<div style="position:absolute;left:1673px;top:397px;width:62px;height:22px;background:#f39c12;border-radius:3px"></div>
<div class="t" style="left:1679.89px;top:408px;font:bold 11px 'Liberation Sans';line-height:0;color:#fff;transform:scaleX(1.1506);transform-origin:0 0;letter-spacing:0.5px">Serviço</div>
<div class="t" style="left:1840.67px;top:409px;font:12px 'Liberation Sans';line-height:0;color:#1a1a1a;transform:scaleX(0.9000);transform-origin:0 0;">1000,00</div>
<div style="position:absolute;left:70px;top:458px;width:1817px;height:1px;background:#e3e3e3"></div>
<svg style="position:absolute;left:84px;top:425px" width="206" height="33" viewBox="84 255 206 33">
<ellipse cx="101" cy="271.5" rx="14" ry="13.6" fill="#e8e8e8"/>
<circle cx="99.6" cy="270.2" r="3.4" fill="none" stroke="#fff" stroke-width="1.6"/><path d="M102.2 272.8 L105.6 276.4" stroke="#fff" stroke-width="1.9" stroke-linecap="round"/>
<ellipse cx="156.8" cy="271.4" rx="16" ry="15.5" fill="#e8e8e8"/>
<rect x="146.8" y="263.9" width="19.2" height="12.9" fill="#fff"/>
<path d="M151.3 265.1 L161.7 265.1 L164.9 268 L164.9 272.7 L161.7 275.7 L151.3 275.7 L148.1 272.7 L148.1 268 Z" fill="#e8e8e8"/>
<ellipse cx="156.4" cy="270.6" rx="3.6" ry="4.5" fill="#fff"/><path d="M155.3 268.7 L156.7 267.9 L156.7 273.1 M155.2 273.1 H158.1" stroke="#e8e8e8" stroke-width="1" fill="none"/>
<ellipse cx="211.4" cy="271.4" rx="13.6" ry="15.5" fill="#e8e8e8"/>
<g transform="translate(210.6 270.2) rotate(45)" fill="none" stroke="#fff" stroke-width="1.2" stroke-linecap="round">
<path d="M -2 -0.9 L 5 -0.9 A 0.95 0.95 0 0 1 5 1 L -5.2 1 A 1.8 1.8 0 0 1 -5.2 -2.6 L 6.4 -2.6 A 2.6 2.6 0 0 1 6.4 2.6 L 0.5 2.6"/>
</g>
<ellipse cx="270.5" cy="271.4" rx="15.3" ry="15.5" fill="#e8e8e8"/>
<path d="M272.2 262.2 L274.3 264.3 L274.3 266.4 L276.4 266.4 L278.3 268.3 L267.8 278.8 L265.7 276.7 L265.7 274.5 L263.5 274.5 L261.7 272.7 Z" fill="#fff"/>
<path d="M271.5 265.1 L275.5 269.2 L268.6 275.6 L265.0 271.8 Z" fill="none" stroke="#e8e8e8" stroke-width="0.9" stroke-dasharray="1.3 0.7"/>
</svg>
<div class="t" style="left:375.13px;top:443px;font:12px 'Liberation Sans';line-height:0;color:#1a1a1a;transform:scaleX(0.9000);transform-origin:0 0;">666</div>
<div class="t" style="left:491.38px;top:443px;font:12px 'Liberation Sans';line-height:0;color:#1a1a1a;transform:scaleX(0.9000);transform-origin:0 0;">1</div>
<div class="t" style="left:554.47px;top:443px;font:12px 'Liberation Sans';line-height:0;color:#1a1a1a;transform:scaleX(0.9000);transform-origin:0 0;">11274940</div>
<div class="t" style="left:653.38px;top:443px;font:12px 'Liberation Sans';line-height:0;color:#1a1a1a;transform:scaleX(0.9000);transform-origin:0 0;">1</div>
<div class="t" style="left:789.57px;top:443px;font:12px 'Liberation Sans';line-height:0;color:#1a1a1a;transform:scaleX(0.8500);transform-origin:0 0;">ICULARES LTDA</div>
<div class="t" style="left:1099.87px;top:443px;font:12px 'Liberation Sans';line-height:0;color:#1a1a1a;transform:scaleX(0.9850);transform-origin:0 0;">08/10/2025 13:29</div>
<div class="t" style="left:1279.07px;top:443px;font:12px 'Liberation Sans';line-height:0;color:#1a1a1a;transform:scaleX(0.9850);transform-origin:0 0;">08/10/2025</div>
<div class="t" style="left:1360.95px;top:443px;font:12px 'Liberation Sans';line-height:0;color:#1a1a1a;transform:scaleX(0.8500);transform-origin:0 0;">NOTA FISCAL</div>
<div style="position:absolute;left:1673px;top:431px;width:62px;height:22px;background:#f39c12;border-radius:3px"></div>
<div class="t" style="left:1679.89px;top:442px;font:bold 11px 'Liberation Sans';line-height:0;color:#fff;transform:scaleX(1.1506);transform-origin:0 0;letter-spacing:0.5px">Serviço</div>
<div class="t" style="left:1840.67px;top:443px;font:12px 'Liberation Sans';line-height:0;color:#1a1a1a;transform:scaleX(0.9000);transform-origin:0 0;">1000,00</div>
<div style="position:absolute;left:70px;top:492px;width:1817px;height:1px;background:#e3e3e3"></div>
<svg style="position:absolute;left:84px;top:459px" width="206" height="33" viewBox="84 255 206 33">
<ellipse cx="101" cy="271.5" rx="14" ry="13.6" fill="#e8e8e8"/>
<circle cx="99.6" cy="270.2" r="3.4" fill="none" stroke="#fff" stroke-width="1.6"/><path d="M102.2 272.8 L105.6 276.4" stroke="#fff" stroke-width="1.9" stroke-linecap="round"/>
<ellipse cx="156.8" cy="271.4" rx="16" ry="15.5" fill="#e8e8e8"/>
<rect x="146.8" y="263.9" width="19.2" height="12.9" fill="#fff"/>
<path d="M151.3 265.1 L161.7 265.1 L164.9 268 L164.9 272.7 L161.7 275.7 L151.3 275.7 L148.1 272.7 L148.1 268 Z" fill="#e8e8e8"/>
<ellipse cx="156.4" cy="270.6" rx="3.6" ry="4.5" fill="#fff"/><path d="M155.3 268.7 L156.7 267.9 L156.7 273.1 M155.2 273.1 H158.1" stroke="#e8e8e8" stroke-width="1" fill="none"/>
<ellipse cx="211.4" cy="271.4" rx="13.6" ry="15.5" fill="#e8e8e8"/>
<g transform="translate(210.6 270.2) rotate(45)" fill="none" stroke="#fff" stroke-width="1.2" stroke-linecap="round">
<path d="M -2 -0.9 L 5 -0.9 A 0.95 0.95 0 0 1 5 1 L -5.2 1 A 1.8 1.8 0 0 1 -5.2 -2.6 L 6.4 -2.6 A 2.6 2.6 0 0 1 6.4 2.6 L 0.5 2.6"/>
</g>
<ellipse cx="270.5" cy="271.4" rx="15.3" ry="15.5" fill="#e8e8e8"/>
<path d="M272.2 262.2 L274.3 264.3 L274.3 266.4 L276.4 266.4 L278.3 268.3 L267.8 278.8 L265.7 276.7 L265.7 274.5 L263.5 274.5 L261.7 272.7 Z" fill="#fff"/>
<path d="M271.5 265.1 L275.5 269.2 L268.6 275.6 L265.0 271.8 Z" fill="none" stroke="#e8e8e8" stroke-width="0.9" stroke-dasharray="1.3 0.7"/>
</svg>
<div class="t" style="left:358.38px;top:477px;font:12px 'Liberation Sans';line-height:0;color:#1a1a1a;transform:scaleX(0.9000);transform-origin:0 0;">611103</div>
<div class="t" style="left:414.03px;top:477px;font:12px 'Liberation Sans';line-height:0;color:#1a1a1a;transform:scaleX(0.8500);transform-origin:0 0;">A</div>
<div class="t" style="left:491.38px;top:477px;font:12px 'Liberation Sans';line-height:0;color:#1a1a1a;transform:scaleX(0.9000);transform-origin:0 0;">1</div>
<div class="t" style="left:553.51px;top:477px;font:12px 'Liberation Sans';line-height:0;color:#1a1a1a;transform:scaleX(0.9000);transform-origin:0 0;">25999504</div>
<div class="t" style="left:653.38px;top:477px;font:12px 'Liberation Sans';line-height:0;color:#1a1a1a;transform:scaleX(0.9000);transform-origin:0 0;">1</div>
<div class="t" style="left:795.12px;top:477px;font:12px 'Liberation Sans';line-height:0;color:#1a1a1a;transform:scaleX(0.8500);transform-origin:0 0;">NE - EIRELI</div>
<div class="t" style="left:1099.87px;top:477px;font:12px 'Liberation Sans';line-height:0;color:#1a1a1a;transform:scaleX(0.9850);transform-origin:0 0;">08/08/2025 17:44</div>
<div class="t" style="left:1279.07px;top:477px;font:12px 'Liberation Sans';line-height:0;color:#1a1a1a;transform:scaleX(0.9850);transform-origin:0 0;">07/08/2025</div>
<div class="t" style="left:1360.95px;top:477px;font:12px 'Liberation Sans';line-height:0;color:#1a1a1a;transform:scaleX(0.8500);transform-origin:0 0;">NOTA FISCAL</div>
<div style="position:absolute;left:1673px;top:465px;width:62px;height:22px;background:#f39c12;border-radius:3px"></div>
<div class="t" style="left:1679.89px;top:476px;font:bold 11px 'Liberation Sans';line-height:0;color:#fff;transform:scaleX(1.1506);transform-origin:0 0;letter-spacing:0.5px">Serviço</div>
<div class="t" style="left:1852.96px;top:477px;font:12px 'Liberation Sans';line-height:0;color:#1a1a1a;transform:scaleX(0.9000);transform-origin:0 0;">75,90</div>
<div style="position:absolute;left:70px;top:526px;width:1817px;height:1px;background:#e3e3e3"></div>
<svg style="position:absolute;left:84px;top:493px" width="206" height="33" viewBox="84 255 206 33">
<ellipse cx="101" cy="271.5" rx="14" ry="13.6" fill="#e8e8e8"/>
<circle cx="99.6" cy="270.2" r="3.4" fill="none" stroke="#fff" stroke-width="1.6"/><path d="M102.2 272.8 L105.6 276.4" stroke="#fff" stroke-width="1.9" stroke-linecap="round"/>
<ellipse cx="156.8" cy="271.4" rx="16" ry="15.5" fill="#e8e8e8"/>
<rect x="146.8" y="263.9" width="19.2" height="12.9" fill="#fff"/>
<path d="M151.3 265.1 L161.7 265.1 L164.9 268 L164.9 272.7 L161.7 275.7 L151.3 275.7 L148.1 272.7 L148.1 268 Z" fill="#e8e8e8"/>
<ellipse cx="156.4" cy="270.6" rx="3.6" ry="4.5" fill="#fff"/><path d="M155.3 268.7 L156.7 267.9 L156.7 273.1 M155.2 273.1 H158.1" stroke="#e8e8e8" stroke-width="1" fill="none"/>
<ellipse cx="211.4" cy="271.4" rx="13.6" ry="15.5" fill="#e8e8e8"/>
<g transform="translate(210.6 270.2) rotate(45)" fill="none" stroke="#fff" stroke-width="1.2" stroke-linecap="round">
<path d="M -2 -0.9 L 5 -0.9 A 0.95 0.95 0 0 1 5 1 L -5.2 1 A 1.8 1.8 0 0 1 -5.2 -2.6 L 6.4 -2.6 A 2.6 2.6 0 0 1 6.4 2.6 L 0.5 2.6"/>
</g>
<ellipse cx="270.5" cy="271.4" rx="15.3" ry="15.5" fill="#e8e8e8"/>
<path d="M272.2 262.2 L274.3 264.3 L274.3 266.4 L276.4 266.4 L278.3 268.3 L267.8 278.8 L265.7 276.7 L265.7 274.5 L263.5 274.5 L261.7 272.7 Z" fill="#fff"/>
<path d="M271.5 265.1 L275.5 269.2 L268.6 275.6 L265.0 271.8 Z" fill="none" stroke="#e8e8e8" stroke-width="0.9" stroke-dasharray="1.3 0.7"/>
</svg>
<div class="t" style="left:369.01px;top:511px;font:12px 'Liberation Sans';line-height:0;color:#1a1a1a;transform:scaleX(0.9000);transform-origin:0 0;">7499</div>
<div class="t" style="left:414.03px;top:511px;font:12px 'Liberation Sans';line-height:0;color:#1a1a1a;transform:scaleX(0.8500);transform-origin:0 0;">A</div>
<div class="t" style="left:491.38px;top:511px;font:12px 'Liberation Sans';line-height:0;color:#1a1a1a;transform:scaleX(0.9000);transform-origin:0 0;">1</div>
<div class="t" style="left:553.61px;top:511px;font:12px 'Liberation Sans';line-height:0;color:#1a1a1a;transform:scaleX(0.9000);transform-origin:0 0;">10926735</div>
<div class="t" style="left:653.38px;top:511px;font:12px 'Liberation Sans';line-height:0;color:#1a1a1a;transform:scaleX(0.9000);transform-origin:0 0;">1</div>
<div class="t" style="left:797.94px;top:511px;font:12px 'Liberation Sans';line-height:0;color:#1a1a1a;transform:scaleX(0.8603);transform-origin:0 0;">KAS SOC DE ADVOGADOS</div>
<div class="t" style="left:1099.87px;top:511px;font:12px 'Liberation Sans';line-height:0;color:#1a1a1a;transform:scaleX(0.9850);transform-origin:0 0;">08/08/2025 17:34</div>
<div class="t" style="left:1279.07px;top:511px;font:12px 'Liberation Sans';line-height:0;color:#1a1a1a;transform:scaleX(0.9850);transform-origin:0 0;">06/08/2025</div>
<div class="t" style="left:1360.95px;top:511px;font:12px 'Liberation Sans';line-height:0;color:#1a1a1a;transform:scaleX(0.8500);transform-origin:0 0;">NOTA FISCAL</div>
<div style="position:absolute;left:1673px;top:499px;width:62px;height:22px;background:#f39c12;border-radius:3px"></div>
<div class="t" style="left:1679.89px;top:510px;font:bold 11px 'Liberation Sans';line-height:0;color:#fff;transform:scaleX(1.1506);transform-origin:0 0;letter-spacing:0.5px">Serviço</div>
<div class="t" style="left:1840.67px;top:511px;font:12px 'Liberation Sans';line-height:0;color:#1a1a1a;transform:scaleX(0.9000);transform-origin:0 0;">3036,00</div>
<div style="position:absolute;left:70px;top:560px;width:1817px;height:1px;background:#e3e3e3"></div>
<svg style="position:absolute;left:84px;top:527px" width="206" height="33" viewBox="84 255 206 33">
<ellipse cx="101" cy="271.5" rx="14" ry="13.6" fill="#e8e8e8"/>
<circle cx="99.6" cy="270.2" r="3.4" fill="none" stroke="#fff" stroke-width="1.6"/><path d="M102.2 272.8 L105.6 276.4" stroke="#fff" stroke-width="1.9" stroke-linecap="round"/>
<ellipse cx="156.8" cy="271.4" rx="16" ry="15.5" fill="#e8e8e8"/>
<rect x="146.8" y="263.9" width="19.2" height="12.9" fill="#fff"/>
<path d="M151.3 265.1 L161.7 265.1 L164.9 268 L164.9 272.7 L161.7 275.7 L151.3 275.7 L148.1 272.7 L148.1 268 Z" fill="#e8e8e8"/>
<ellipse cx="156.4" cy="270.6" rx="3.6" ry="4.5" fill="#fff"/><path d="M155.3 268.7 L156.7 267.9 L156.7 273.1 M155.2 273.1 H158.1" stroke="#e8e8e8" stroke-width="1" fill="none"/>
<ellipse cx="211.4" cy="271.4" rx="13.6" ry="15.5" fill="#e8e8e8"/>
<g transform="translate(210.6 270.2) rotate(45)" fill="none" stroke="#fff" stroke-width="1.2" stroke-linecap="round">
<path d="M -2 -0.9 L 5 -0.9 A 0.95 0.95 0 0 1 5 1 L -5.2 1 A 1.8 1.8 0 0 1 -5.2 -2.6 L 6.4 -2.6 A 2.6 2.6 0 0 1 6.4 2.6 L 0.5 2.6"/>
</g>
<ellipse cx="270.5" cy="271.4" rx="15.3" ry="15.5" fill="#e8e8e8"/>
<path d="M272.2 262.2 L274.3 264.3 L274.3 266.4 L276.4 266.4 L278.3 268.3 L267.8 278.8 L265.7 276.7 L265.7 274.5 L263.5 274.5 L261.7 272.7 Z" fill="#fff"/>
<path d="M271.5 265.1 L275.5 269.2 L268.6 275.6 L265.0 271.8 Z" fill="none" stroke="#e8e8e8" stroke-width="0.9" stroke-dasharray="1.3 0.7"/>
</svg>
<div class="t" style="left:350.82px;top:545px;font:12px 'Liberation Sans';line-height:0;color:#1a1a1a;transform:scaleX(0.9000);transform-origin:0 0;">3456974</div>
<div class="t" style="left:413.25px;top:545px;font:12px 'Liberation Sans';line-height:0;color:#1a1a1a;transform:scaleX(0.8500);transform-origin:0 0;">ND</div>
<div class="t" style="left:491.38px;top:545px;font:12px 'Liberation Sans';line-height:0;color:#1a1a1a;transform:scaleX(0.9000);transform-origin:0 0;">1</div>
<div class="t" style="left:553.61px;top:545px;font:12px 'Liberation Sans';line-height:0;color:#1a1a1a;transform:scaleX(0.9000);transform-origin:0 0;">34028316</div>
<div class="t" style="left:635.38px;top:545px;font:12px 'Liberation Sans';line-height:0;color:#1a1a1a;transform:scaleX(0.9000);transform-origin:0 0;">7101</div>
<div class="t" style="left:794.42px;top:545px;font:12px 'Liberation Sans';line-height:0;color:#1a1a1a;transform:scaleX(0.8500);transform-origin:0 0;">DE CORREIOS E TELEGRAFOS</div>
<div class="t" style="left:1099.87px;top:545px;font:12px 'Liberation Sans';line-height:0;color:#1a1a1a;transform:scaleX(0.9850);transform-origin:0 0;">08/08/2025 16:40</div>
<div class="t" style="left:1278.92px;top:545px;font:12px 'Liberation Sans';line-height:0;color:#1a1a1a;transform:scaleX(0.9850);transform-origin:0 0;">31/07/2025</div>
<div class="t" style="left:1360.95px;top:545px;font:12px 'Liberation Sans';line-height:0;color:#1a1a1a;transform:scaleX(0.8500);transform-origin:0 0;">RECIBO CONTRATO</div>
<div style="position:absolute;left:1673px;top:533px;width:62px;height:22px;background:#f39c12;border-radius:3px"></div>
<div class="t" style="left:1679.89px;top:544px;font:bold 11px 'Liberation Sans';line-height:0;color:#fff;transform:scaleX(1.1506);transform-origin:0 0;letter-spacing:0.5px">Serviço</div>
<div class="t" style="left:1840.71px;top:545px;font:12px 'Liberation Sans';line-height:0;color:#1a1a1a;transform:scaleX(0.9000);transform-origin:0 0;">3427,41</div>
<div style="position:absolute;left:70px;top:594px;width:1817px;height:1px;background:#e3e3e3"></div>
<svg style="position:absolute;left:84px;top:561px" width="206" height="33" viewBox="84 255 206 33">
<ellipse cx="101" cy="271.5" rx="14" ry="13.6" fill="#e8e8e8"/>
<circle cx="99.6" cy="270.2" r="3.4" fill="none" stroke="#fff" stroke-width="1.6"/><path d="M102.2 272.8 L105.6 276.4" stroke="#fff" stroke-width="1.9" stroke-linecap="round"/>
<ellipse cx="156.8" cy="271.4" rx="16" ry="15.5" fill="#e8e8e8"/>
<rect x="146.8" y="263.9" width="19.2" height="12.9" fill="#fff"/>
<path d="M151.3 265.1 L161.7 265.1 L164.9 268 L164.9 272.7 L161.7 275.7 L151.3 275.7 L148.1 272.7 L148.1 268 Z" fill="#e8e8e8"/>
<ellipse cx="156.4" cy="270.6" rx="3.6" ry="4.5" fill="#fff"/><path d="M155.3 268.7 L156.7 267.9 L156.7 273.1 M155.2 273.1 H158.1" stroke="#e8e8e8" stroke-width="1" fill="none"/>
<ellipse cx="211.4" cy="271.4" rx="13.6" ry="15.5" fill="#e8e8e8"/>
<g transform="translate(210.6 270.2) rotate(45)" fill="none" stroke="#fff" stroke-width="1.2" stroke-linecap="round">
<path d="M -2 -0.9 L 5 -0.9 A 0.95 0.95 0 0 1 5 1 L -5.2 1 A 1.8 1.8 0 0 1 -5.2 -2.6 L 6.4 -2.6 A 2.6 2.6 0 0 1 6.4 2.6 L 0.5 2.6"/>
</g>
<ellipse cx="270.5" cy="271.4" rx="15.3" ry="15.5" fill="#e8e8e8"/>
<path d="M272.2 262.2 L274.3 264.3 L274.3 266.4 L276.4 266.4 L278.3 268.3 L267.8 278.8 L265.7 276.7 L265.7 274.5 L263.5 274.5 L261.7 272.7 Z" fill="#fff"/>
<path d="M271.5 265.1 L275.5 269.2 L268.6 275.6 L265.0 271.8 Z" fill="none" stroke="#e8e8e8" stroke-width="0.9" stroke-dasharray="1.3 0.7"/>
</svg>
<div class="t" style="left:362.81px;top:579px;font:12px 'Liberation Sans';line-height:0;color:#1a1a1a;transform:scaleX(0.9000);transform-origin:0 0;">82025</div>
<div class="t" style="left:413.25px;top:579px;font:12px 'Liberation Sans';line-height:0;color:#1a1a1a;transform:scaleX(0.8500);transform-origin:0 0;">MUT</div>
<div class="t" style="left:491.38px;top:579px;font:12px 'Liberation Sans';line-height:0;color:#1a1a1a;transform:scaleX(0.9000);transform-origin:0 0;">1</div>
<div class="t" style="left:559.81px;top:579px;font:12px 'Liberation Sans';line-height:0;color:#1a1a1a;transform:scaleX(0.9000);transform-origin:0 0;">9184159</div>
<div class="t" style="left:653.38px;top:579px;font:12px 'Liberation Sans';line-height:0;color:#1a1a1a;transform:scaleX(0.9000);transform-origin:0 0;">1</div>
<div class="t" style="left:796.29px;top:579px;font:12px 'Liberation Sans';line-height:0;color:#1a1a1a;transform:scaleX(0.8500);transform-origin:0 0;">DA</div>
<div class="t" style="left:1099.87px;top:579px;font:12px 'Liberation Sans';line-height:0;color:#1a1a1a;transform:scaleX(0.9850);transform-origin:0 0;">08/08/2025 16:05</div>
<div class="t" style="left:1279.07px;top:579px;font:12px 'Liberation Sans';line-height:0;color:#1a1a1a;transform:scaleX(0.9850);transform-origin:0 0;">08/08/2025</div>
<div class="t" style="left:1360.95px;top:579px;font:12px 'Liberation Sans';line-height:0;color:#1a1a1a;transform:scaleX(0.8500);transform-origin:0 0;">RECIBO CONTRATO</div>
<div style="position:absolute;left:1673px;top:567px;width:62px;height:22px;background:#f39c12;border-radius:3px"></div>
<div class="t" style="left:1679.89px;top:578px;font:bold 11px 'Liberation Sans';line-height:0;color:#fff;transform:scaleX(1.1506);transform-origin:0 0;letter-spacing:0.5px">Serviço</div>
<div class="t" style="left:1834.48px;top:579px;font:12px 'Liberation Sans';line-height:0;color:#1a1a1a;transform:scaleX(0.9000);transform-origin:0 0;">23204,01</div>
<div style="position:absolute;left:679px;top:261px;width:119px;height:327px;background:radial-gradient(ellipse at 50% 45%,#e7e7e7 0%,#e9e9e9 45%,#efefef 100%)"></div>
<div style="position:absolute;left:68px;top:595px;width:1819px;height:15px;background:#f7f7f7"></div>
<svg style="position:absolute;left:72px;top:597px" width="8" height="11"><path d="M1 5.3 L6 1 L6 10 Z" fill="#8a8a8a"/></svg>
<div style="position:absolute;left:86px;top:598px;width:1781px;height:9px;background:#8a8a8a;border-radius:4.5px"></div>
<svg style="position:absolute;left:1875px;top:597px" width="8" height="11"><path d="M1 1 L6 5.3 L1 10 Z" fill="#8a8a8a"/></svg>
<div style="position:absolute;left:69px;top:610px;width:1819px;height:37px;box-sizing:border-box;border:1px solid #dcdcdc;border-top:none;background:#f5f5f5"></div>
<div class="t" style="left:94.22px;top:628px;font:15px 'Liberation Sans';line-height:0;color:#929292;transform:scaleX(1.1210);transform-origin:0 0;">Página 1 de 2033</div>
<div style="position:absolute;left:1617px;top:615px;width:266px;height:30px;box-sizing:border-box;border:1px solid #dcdcdc;border-radius:5px;background:#fff"></div>
<div style="position:absolute;left:1618px;top:616px;width:44px;height:28px;background:#f5f5f5;border-radius:4px 0 0 4px"></div>
<div style="position:absolute;left:1662px;top:615px;width:36px;height:30px;background:#3172b0"></div>
<div style="position:absolute;left:1731px;top:616px;width:1px;height:28px;background:#dcdcdc"></div>
<div style="position:absolute;left:1765px;top:616px;width:1px;height:28px;background:#dcdcdc"></div>
<div style="position:absolute;left:1799px;top:616px;width:1px;height:28px;background:#dcdcdc"></div>
<div style="position:absolute;left:1834px;top:616px;width:1px;height:28px;background:#dcdcdc"></div>
<div class="t" style="left:1631.04px;top:631px;font:10px 'Liberation Sans';line-height:0;color:#999;transform:scaleX(1.0501);transform-origin:0 0;letter-spacing:1px">Ant</div>
<div class="t" style="left:1676.99px;top:631px;font:bold 10px 'Liberation Sans';line-height:0;color:#fff;transform:scaleX(1.0793);transform-origin:0 0;">1</div>
<div class="t" style="left:1710.98px;top:631px;font:10px 'Liberation Sans';line-height:0;color:#3172b0;transform:scaleX(1.2619);transform-origin:0 0;">2</div>
<div class="t" style="left:1744.84px;top:631px;font:10px 'Liberation Sans';line-height:0;color:#3172b0;transform:scaleX(1.2381);transform-origin:0 0;">3</div>
<div class="t" style="left:1779.44px;top:631px;font:10px 'Liberation Sans';line-height:0;color:#3172b0;transform:scaleX(1.1296);transform-origin:0 0;">4</div>
<div class="t" style="left:1813.58px;top:631px;font:10px 'Liberation Sans';line-height:0;color:#3172b0;transform:scaleX(1.2804);transform-origin:0 0;">5</div>
<div class="t" style="left:1847.66px;top:631px;font:10px 'Liberation Sans';line-height:0;color:#3172b0;transform:scaleX(1.0759);transform-origin:0 0;letter-spacing:1px">Seg</div>
<div style="position:absolute;left:1889px;top:221px;width:15px;height:426px;background:#f9f9f9"></div>
<svg style="position:absolute;left:1890px;top:225px" width="13" height="9"><path d="M1.8 7 L6.5 2 L11.2 7 Z" fill="#8a8a8a"/></svg>
<div style="position:absolute;left:1892px;top:239px;width:9px;height:388px;background:#8a8a8a;border-radius:4.5px"></div>
<svg style="position:absolute;left:1890px;top:633px" width="13" height="9"><path d="M1.8 2 L11.2 2 L6.5 7 Z" fill="#8a8a8a"/></svg>
</body></html>
